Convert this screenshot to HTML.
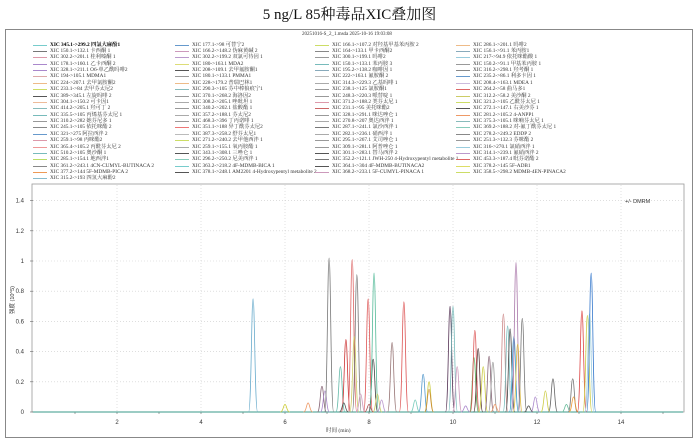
<!DOCTYPE html>
<html><head><meta charset="utf-8">
<style>
html,body{margin:0;padding:0;background:#fff;}
body{width:699px;height:441px;position:relative;overflow:hidden;font-family:"Liberation Serif","Noto Serif CJK SC","Noto Sans CJK SC",serif;}
.t{position:absolute;left:0;width:699px;top:3px;text-align:center;font-size:15px;color:#111;}
.box{position:absolute;left:5px;top:29px;width:686px;height:407px;border:1px solid #888;}
.lg{position:absolute;font-size:5.3px;line-height:6px;white-space:nowrap;color:#333;}
.ln{position:absolute;height:1px;width:14px;}
.sm{position:absolute;font-size:5.5px;color:#333;font-family:"Liberation Sans","Noto Sans CJK SC",sans-serif;}
</style></head><body>
<div class="t">5 ng/L 85种毒品XIC叠加图</div>
<div class="box"></div>
<div class="lg" style="left:302px;top:32px;font-size:5px;">20251016-S_2_1.msda 2025-10-16 19:03:08</div>
<div id="leg"></div>
<svg id="plot" width="699" height="441" style="position:absolute;left:0;top:0"></svg>
<div class="sm" style="left:625px;top:199px;">+/- DMRM</div>
<div class="sm" style="left:326px;top:426px;font-family:'Liberation Serif','Noto Serif CJK SC',serif;">时间 (min)</div>
<div class="sm" style="left:-8px;top:296px;transform:rotate(-90deg);width:40px;text-align:center;">强度 (10^5)</div>
<script>
var cols=[
[33,["XIC 345.1->299.2 四氯大麻酚1","XIC 150.1->132.1 卡西酮 1","XIC 302.2->201.1 桂利嗪酮 1","XIC 178.1->160.1 乙卡西酮 2","XIC 328.1->211.1 O6-单乙酰吗啡2","XIC 194->105.1 MDMA1","XIC 224->207.1 去甲氯胺酮2","XIC 233.1->84 去甲芬太尼2","XIC 389->345.1 左旋吗啡 2","XIC 304.1->150.2 可卡因1","XIC 414.2->205.1 羟可丁 2","XIC 335.5->105 丙烯基芬太尼 1","XIC 310.2->282 她芬尼多 1","XIC 245.1->105 依托咪酯 2","XIC 321->275 阿拉西泮 2","XIC 259.1->98 丙咪酯2","XIC 365.4->105.2 丙酰芬太尼 2","XIC 510.2->105 奥沙酮 1","XIC 285.1->154.1 地西泮1","XIC 361.2->243.1 4CN-CUMYL-BUTINACA 2","XIC 377.2->144 5F-MDMB-PICA 2","XIC 315.2->193 四氢大麻酚2"],
 ["#7cc","#777","#d9a","#a8c","#a8c","#daa","#eb8","#cd6","#555","#eb9","#8bb","#7bb","#999","#888","#69c","#d9a","#e99","#7bb","#bd6","#888","#e95","#8bc"]],
[175,["XIC 177.1->98 可替宁2","XIC 166.2->148.2 伪麻黄碱 2","XIC 302.2->199.2 双氯可待因 1","XIC 180->163.1 MDA2","XIC 208->109.1 去甲氟胺酮1","XIC 180.1->133.1 PMMA1","XIC 228->179.2 普瑞巴林1","XIC 290.3->105 芬中棒狼痕宁1","XIC 370.1->268.2 海洛因2","XIC 308.2->205.1 唑吡坦 1","XIC 340.2->202.1 盐酸酯 1","XIC 357.2->188.1 芬太尼2","XIC 468.3->396 丁丙诺啡 1","XIC 351.1->188 异丁酰芬太尼2","XIC 387.3->258.2 舒芬太尼1","XIC 271.2->240.2 去甲他西泮 1","XIC 259.1->155.1 氧丙胺酯 1","XIC 343.1->308.1 三唑仑 1","XIC 296.2->250.2 尼美西泮 1","XIC 363.2->218.2 4F-MDMB-BICA 1","XIC 378.1->248.1 AM2201 4-Hydroxypentyl metabolite 2"],
 ["#69c","#c9b","#b9c","#dd7","#555","#999","#eb8","#8bb","#999","#aaa","#999","#aaa","#999","#e77","#bbb","#cd6","#aaa","#555","#8cb","#7cc","#555"]],
[315,["XIC 166.1->107.2 对羟基甲基苯丙胺 2","XIC 164->133.1 甲卡西酮2","XIC 300.1->199.1 吗啡2","XIC 150.1->133.1 苯丙胺 3","XIC 195.2->138.2 咖啡因 1","XIC 222->163.1 氟胺酮 2","XIC 314.3->229.3 乙基吗啡 1","XIC 238.1->125 氯胺酮1","XIC 248.3->220.3 哌替啶 1","XIC 371.2->188.2 类芬太尼 1","XIC 231.1->95 美托咪酯2","XIC 328.1->291.1 咪达唑仑 1","XIC 270.8->207 奥达西泮 1","XIC 287.1->241.1 氯沙西泮 1","XIC 282.1->236.1 硝西泮 1","XIC 295.1->267.1 艾司唑仑 1","XIC 309.1->281.1 阿普唑仑 1","XIC 301.1->283.1 替马西泮 2","XIC 352.2->121.1 JWH-250 4-Hydroxypentyl metabolite 1","XIC 364.1->304 4F-MDMB-BUTINACA2","XIC 368.2->233.1 5F-CUMYL-PINACA 1"],
 ["#cd6","#888","#999","#7bb","#8ab","#bbb","#aaa","#999","#999","#d9a","#c66","#999","#aaa","#777","#aaa","#999","#999","#555","#777","#555","#c9b"]],
[456,["XIC 286.1->201.1 吗啡2","XIC 156.1->91.1 苯丙胺1","XIC 217->94.9 依托咪酯酸 1","XIC 150.2->91.1 甲基苯丙胺 1","XIC 316.2->298.1 羟考酮 1","XIC 235.2->86.1 利多卡因 1","XIC 208.4->163.1 MDEA 1","XIC 264.2->58 曲马多1","XIC 312.2->58.2 美沙酮 2","XIC 321.2->105 乙酰芬太尼 1","XIC 272.1->147.1 右美沙芬 1","XIC 281.2->105.2 4-ANPP1","XIC 375.3->105.1 咪喃芬太尼 1","XIC 369.2->188.2 对-氟丁酰芬太尼 1","XIC 278.2->249.2 EDDP 2","XIC 251.3->132.3 芬咪酯 2","XIC 316->270.1 氯硝西泮 1","XIC 314.1->239.1 氟硝西泮 2","XIC 453.3->187.4 吡芬诺酯 2","XIC 378.2->145 5F-ADB1","XIC 358.5->298.2 MDMB-4EN-PINACA2"],
 ["#eb8","#8ab","#9cd","#999","#888","#69c","#cbd","#d66","#cc6","#cd6","#555","#e96","#8bb","#8cb","#888","#999","#9cd","#b9c","#d66","#dd6","#cd6"]]
];
var h="";
cols.forEach(function(c){c[1].forEach(function(s,i){var y=41.5+i*6.38;
h+='<div class="ln" style="left:'+c[0]+'px;top:'+(y+3)+'px;background:'+c[2][i]+'"></div><div class="lg" style="left:'+(c[0]+17)+'px;top:'+y+'px;'+(i==0&&c[0]==33?'font-weight:bold;color:#000':'')+'">'+s+'</div>';});});
document.getElementById('leg').innerHTML=h;
var X=function(t){return 33+42*t},Y=function(v){return 412-151*v};
var s='<rect x="32" y="184" width="652" height="228" fill="none" stroke="#999" stroke-width="0.8"/>';
for(var t=2;t<=14;t+=2)s+='<line x1="'+X(t)+'" y1="185" x2="'+X(t)+'" y2="412" stroke="#ccc" stroke-width="0.6" stroke-dasharray="1,2"/><text x="'+X(t)+'" y="424" font-size="6" text-anchor="middle" fill="#333" font-family="Liberation Sans">'+t+'</text>';
for(var t=1;t<=15;t++)s+='<line x1="'+X(t)+'" y1="412" x2="'+X(t)+'" y2="414" stroke="#666" stroke-width="0.6"/>';
var yl=["0","0.2","0.4","0.6","0.8","1","1.2","1.4"];
for(var i=0;i<8;i++){var y=Y(i*0.2);if(i>0)s+='<line x1="33" y1="'+y+'" x2="683" y2="'+y+'" stroke="#ccc" stroke-width="0.6" stroke-dasharray="1,2"/>';
s+='<text x="24" y="'+(y+2)+'" font-size="6" text-anchor="end" fill="#333" font-family="Liberation Sans">'+yl[i]+'</text><line x1="30" y1="'+y+'" x2="33" y2="'+y+'" stroke="#666" stroke-width="0.6"/>';}
var P=[[5.24,.75,"#6aaccc"],[6.0,.05,"#cc3"],[6.55,.06,"#e96"],[6.88,.17,"#867"],[6.95,.14,"#a8c"],[7.05,1.02,"#777"],[7.32,.3,"#6ba"],[7.45,.48,"#c33"],[7.6,1.01,"#d66"],[7.71,.91,"#777"],[7.65,.5,"#cc6"],[7.8,.12,"#c9b"],[7.98,.75,"#d55"],[8.1,.35,"#444"],[8.12,.92,"#5b9"],[8.2,.12,"#cc6"],[8.3,.08,"#b9c"],[8.55,.46,"#977"],[8.83,.73,"#d55"],[9.1,.08,"#7cb"],[9.29,.25,"#59c"],[9.43,.2,"#cc4"],[9.43,.15,"#c83"],[9.93,.7,"#535"],[10.0,.7,"#7bb"],[10.1,.3,"#c9b"],[10.5,.36,"#5a5"],[10.52,.54,"#d55"],[10.6,.42,"#533"],[10.72,.3,"#cc4"],[10.86,.37,"#867"],[10.95,.33,"#999"],[11.2,.65,"#c88"],[11.3,.57,"#7bb"],[11.36,.55,"#444"],[11.45,.5,"#39c"],[11.5,.99,"#a7a"],[11.54,.45,"#db4"],[11.65,.62,"#777"],[11.96,.1,"#a8c"],[12.2,.14,"#cc4"],[12.38,.22,"#666"],[12.7,.05,"#6b9"],[12.85,.22,"#777"],[12.87,.1,"#e93"],[13.07,.67,"#d44"],[13.2,.64,"#cc4"],[13.25,.65,"#9cd"],[13.29,.92,"#37c"],[7.4,.06,"#555"],[8.0,.05,"#a55"],[10.3,.04,"#a8c"],[11.0,.05,"#e96"],[11.8,.04,"#555"]];
s+='<path d="M33 412H683" stroke="#3a9a8a" stroke-width="1"/>';
P.forEach(function(p){var x=X(p[0]),y=Y(p[1]),w=4.5;
s+='<path d="M'+(x-w)+' 412 C'+(x-1.8)+' 412 '+(x-1.6)+' '+y+' '+x+' '+y+' C'+(x+1.6)+' '+y+' '+(x+1.8)+' 412 '+(x+w)+' 412" fill="none" stroke="'+p[2]+'" stroke-width="0.8"/>';});
document.getElementById('plot').innerHTML=s;
</script>
</body></html>
